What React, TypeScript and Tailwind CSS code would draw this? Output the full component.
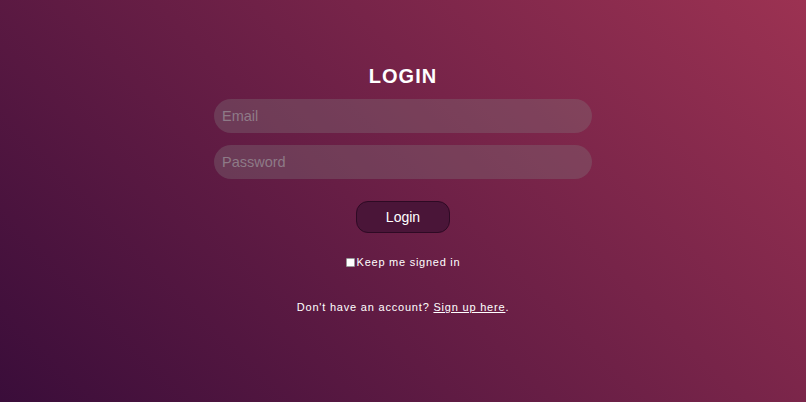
import React from "react";

const App = () => {
  return (
    <div
      className="flex h-[402px] w-full flex-col items-center bg-[linear-gradient(45deg,#3a0d3a,#9c3252)] pt-[66px] text-white"
      style={{ fontFamily: '"Liberation Sans", Arial, sans-serif' }}
    >
      <h1 className="text-[20px] font-bold leading-[20px] tracking-[1px]">LOGIN</h1>
      <input
        type="email"
        placeholder="Email"
        className="mt-[13px] h-[34px] w-[378px] rounded-full bg-[rgba(130,125,128,0.32)] px-[8px] text-[14.5px] text-white outline-none placeholder:text-[#8e7a87]"
      />
      <input
        type="password"
        placeholder="Password"
        className="mt-[12px] h-[34px] w-[378px] rounded-full bg-[rgba(130,125,128,0.32)] px-[8px] text-[14.5px] text-white outline-none placeholder:text-[#8e7a87]"
      />
      <button className="mt-[22px] h-[32px] w-[94px] rounded-[12px] border border-[#2e0a24] bg-[#4a1538] text-[14px] text-white">
        Login
      </button>
      <label className="mt-[22px] flex items-center text-[11px] leading-[14px] tracking-[0.75px]">
        <input
          type="checkbox"
          className="mr-[2px] h-[9px] w-[9px] appearance-none rounded-[1px] border border-[#999] bg-white"
        />
        Keep me signed in
      </label>
      <p className="mt-[31px] text-[11px] leading-[14px] tracking-[0.8px]">
        Don't have an account?{" "}
        <a href="#" className="underline">
          Sign up here
        </a>
        .
      </p>
    </div>
  );
};

export default App;
